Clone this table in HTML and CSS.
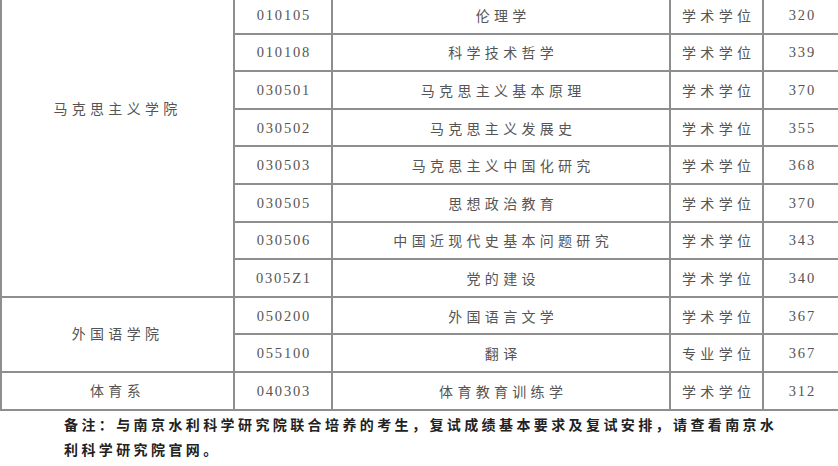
FILE: index.html
```html
<!DOCTYPE html>
<html lang="zh">
<head>
<meta charset="utf-8">
<link rel="stylesheet" href="styles.css">
</head>
<body>
<div class="page">
<table class="grid">
  <colgroup>
    <col class="c-school"><col class="c-code"><col class="c-name"><col class="c-type"><col class="c-score">
  </colgroup>
  <tbody>
    <tr>
      <td class="school school-top" rowspan="8"><span class="zh">马克思主义学院</span></td>
      <td class="num">010105</td><td class="zh">伦理学</td><td class="zh">学术学位</td><td class="num">320</td>
    </tr>
    <tr><td class="num">010108</td><td class="zh">科学技术哲学</td><td class="zh">学术学位</td><td class="num">339</td></tr>
    <tr><td class="num">030501</td><td class="zh">马克思主义基本原理</td><td class="zh">学术学位</td><td class="num">370</td></tr>
    <tr><td class="num">030502</td><td class="zh">马克思主义发展史</td><td class="zh">学术学位</td><td class="num">355</td></tr>
    <tr><td class="num">030503</td><td class="zh">马克思主义中国化研究</td><td class="zh">学术学位</td><td class="num">368</td></tr>
    <tr><td class="num">030505</td><td class="zh">思想政治教育</td><td class="zh">学术学位</td><td class="num">370</td></tr>
    <tr><td class="num">030506</td><td class="zh">中国近现代史基本问题研究</td><td class="zh">学术学位</td><td class="num">343</td></tr>
    <tr><td class="num">0305Z1</td><td class="zh">党的建设</td><td class="zh">学术学位</td><td class="num">340</td></tr>
    <tr>
      <td class="school" rowspan="2"><span class="zh">外国语学院</span></td>
      <td class="num">050200</td><td class="zh">外国语言文学</td><td class="zh">学术学位</td><td class="num">367</td>
    </tr>
    <tr><td class="num">055100</td><td class="zh">翻译</td><td class="zh">专业学位</td><td class="num">367</td></tr>
    <tr>
      <td class="school"><span class="zh">体育系</span></td>
      <td class="num">040303</td><td class="zh">体育教育训练学</td><td class="zh">学术学位</td><td class="num">312</td>
    </tr>
  </tbody>
</table>
<p class="note">备注：与南京水利科学研究院联合培养的考生，复试成绩基本要求及复试安排，请查看南京水利科学研究院官网。</p>
</div>
</body>
</html>
```
FILE: styles.css
```css
html, body {
  margin: 0;
  padding: 0;
  background: #ffffff;
  overflow: hidden;
}
.page {
  width: 838px;
  height: 466px;
  overflow: hidden;
}
.grid {
  margin-top: -5px;
  width: 839px;
  table-layout: fixed;
  border-collapse: collapse;
  color: #555555;
}
.c-school { width: 233px; }
.c-code { width: 98px; }
.c-name { width: 338px; }
.c-type { width: 93px; }
.c-score { width: 77px; }
.grid td {
  border: 2px solid #8e8e8e;
  height: 35.6px;
  padding: 0;
  text-align: center;
  vertical-align: middle;
  font-size: 14px;
  line-height: 20px;
}
.grid td.zh, .grid .zh {
  font-family: "Noto Sans CJK SC", "Noto Sans", sans-serif;
  letter-spacing: 4.3px;
  text-indent: 4.3px;
}
.grid td.num {
  font-family: "Liberation Serif", "DejaVu Serif", serif;
  font-size: 14.5px;
  letter-spacing: 1.8px;
  text-indent: 1.8px;
}
.school-top {
  vertical-align: top !important;
  padding-top: 101px !important;
}
.note {
  margin: 1px 0 0 0;
  padding-left: 64px;
  width: 724px;
  font-family: "Noto Sans CJK SC", "Noto Sans", sans-serif;
  font-weight: bold;
  font-size: 14px;
  line-height: 25px;
  letter-spacing: 3.4px;
  color: #222222;
}
```
